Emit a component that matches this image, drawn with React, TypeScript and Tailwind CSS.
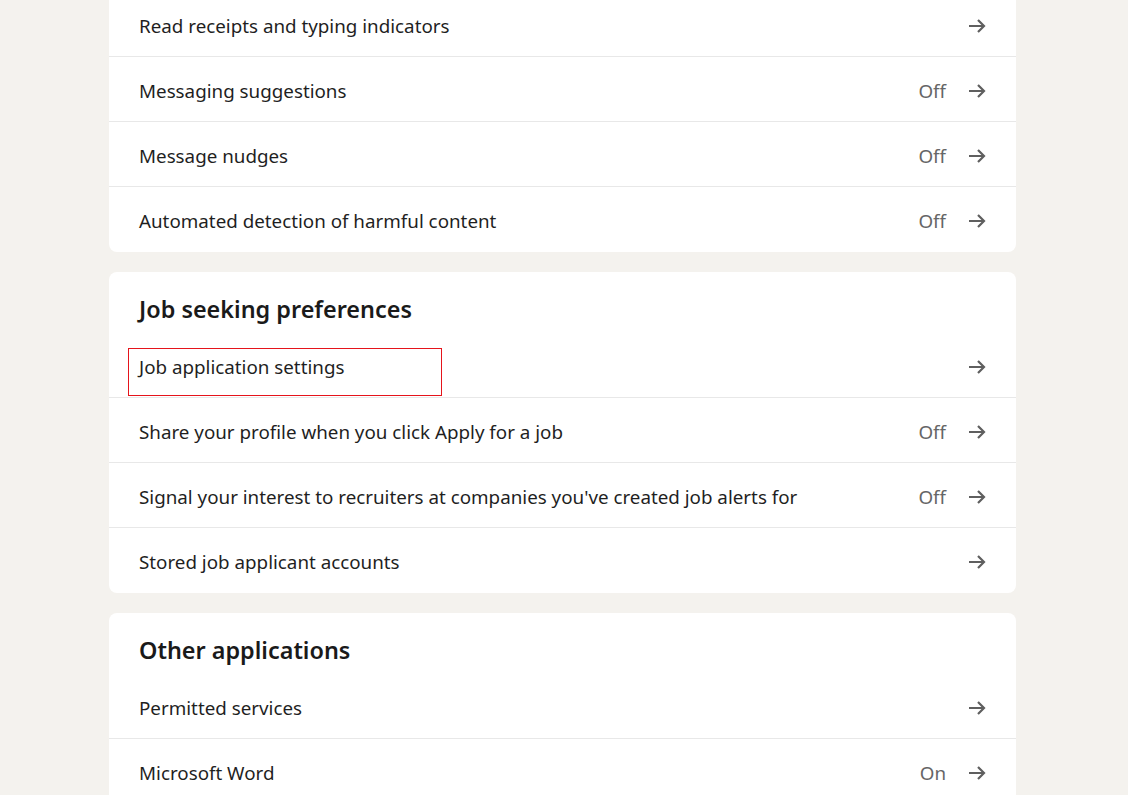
type Row = {
  label: string;
  value?: string;
  highlight?: boolean;
};

type Section = {
  id: string;
  title?: string;
  rows: Row[];
};

const sections: Section[] = [
  {
    id: "messaging",
    rows: [
      { label: "Read receipts and typing indicators" },
      { label: "Messaging suggestions", value: "Off" },
      { label: "Message nudges", value: "Off" },
      { label: "Automated detection of harmful content", value: "Off" },
    ],
  },
  {
    id: "jobs",
    title: "Job seeking preferences",
    rows: [
      { label: "Job application settings", highlight: true },
      { label: "Share your profile when you click Apply for a job", value: "Off" },
      {
        label: "Signal your interest to recruiters at companies you've created job alerts for",
        value: "Off",
      },
      { label: "Stored job applicant accounts" },
    ],
  },
  {
    id: "other",
    title: "Other applications",
    rows: [
      { label: "Permitted services" },
      { label: "Microsoft Word", value: "On" },
    ],
  },
];

function ArrowIcon() {
  return (
    <svg width="18" height="16" viewBox="0 0 18 16" fill="none" className="mt-[3px] shrink-0">
      <path
        d="M1 8h15M10 2l6 6-6 6"
        stroke="#5f5f5f"
        strokeWidth="2.2"
        strokeLinecap="butt"
        strokeLinejoin="miter"
      />
    </svg>
  );
}

function SettingRow({ row, last }: { row: Row; last: boolean }) {
  return (
    <div
      className={`relative flex h-[65px] items-center justify-between px-[30px] ${
        last ? "" : "border-b border-[#e8e8e8]"
      }`}
    >
      {row.highlight && (
        <div className="pointer-events-none absolute left-[19px] top-[15px] h-[48px] w-[314px] border border-[#e5141b]" />
      )}
      <span className="pt-[4px] text-[18.8px] text-[#1f1f1f]">{row.label}</span>
      <div className="flex items-center gap-[22px]">
        {row.value && (
          <span className="pt-[4px] text-[18.8px] text-[#666666]">{row.value}</span>
        )}
        <ArrowIcon />
      </div>
    </div>
  );
}

export default function App() {
  return (
    <div
      className="min-h-[795px] overflow-hidden bg-[#f4f2ee]"
      style={{ fontFamily: '"Noto Sans", "Open Sans", Arial, sans-serif' }}
    >
      <div className="-mt-[8px] ml-[109px] flex w-[907px] flex-col gap-[20px] pb-10">
        {sections.map((section) => (
          <div key={section.id} className="overflow-hidden rounded-[8px] bg-white">
            {section.title && (
              <h2 className="h-[61px] px-[30px] pt-[22px] text-[23.4px] font-semibold leading-[30px] text-[#1a1a1a]">
                {section.title}
              </h2>
            )}
            {section.rows.map((row, i) => (
              <SettingRow key={row.label} row={row} last={i === section.rows.length - 1} />
            ))}
          </div>
        ))}
      </div>
    </div>
  );
}
